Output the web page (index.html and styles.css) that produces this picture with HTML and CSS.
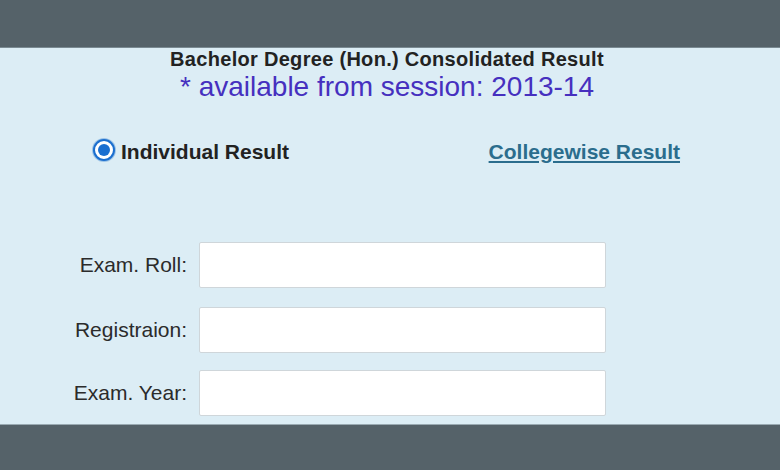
FILE: index.html
```html
<!DOCTYPE html>
<html>
<head>
<meta charset="utf-8">
<link rel="stylesheet" href="styles.css">
</head>
<body>
<div class="topbar"></div>
<main class="panel">
  <div class="title">Bachelor Degree (Hon.) Consolidated Result</div>
  <div class="subtitle">* available from session: 2013-14</div>
  <div class="choices">
    <label class="radio-opt"><span class="radio"><span class="dot"></span></span>Individual Result</label>
    <a class="link" href="#">Collegewise Result</a>
  </div>
  <div class="form">
    <div class="row"><span class="lbl">Exam. Roll:</span><span class="box"></span></div>
    <div class="row"><span class="lbl">Registraion:</span><span class="box"></span></div>
    <div class="row"><span class="lbl">Exam. Year:</span><span class="box"></span></div>
  </div>
</main>
<div class="bottombar"></div>
</body>
</html>
```
FILE: styles.css
```css
html, body { margin: 0; padding: 0; }
body {
  width: 780px;
  height: 470px;
  overflow: hidden;
  font-family: "Liberation Sans", Arial, sans-serif;
  background: #dcedf5;
  display: flex;
  flex-direction: column;
}
.topbar { height: 47px; background: #556269; border-bottom: 1px solid #7a8a92; flex: none; }
.bottombar { height: 45px; background: #556269; border-top: 1px solid #9aaab2; flex: none; }
.panel {
  flex: 1;
  display: flex;
  flex-direction: column;
  background: #dcedf5;
}
.title {
  text-align: center;
  font-weight: bold;
  font-size: 20px;
  line-height: 22px;
  color: #222;
  letter-spacing: 0.3px;
  padding-right: 6px;
}
.subtitle {
  text-align: center;
  font-size: 28px;
  line-height: 30px;
  margin-top: 2px;
  color: #4630bf;
  margin-left: -6px;
}
.choices {
  display: flex;
  justify-content: space-between;
  align-items: center;
  margin-top: 38px;
  padding-left: 93px;
  padding-right: 100px;
}
.radio-opt {
  display: flex;
  align-items: center;
  font-weight: bold;
  font-size: 21px;
  color: #222;
}
.radio {
  width: 18px;
  height: 18px;
  border-radius: 50%;
  border: 2px solid #1b6fcf;
  background: #fff;
  display: flex;
  align-items: center;
  justify-content: center;
  margin-right: 6px;
  margin-top: -4px;
  box-shadow: 0 0 0 1px #9cc3e6;
}
.dot { width: 12px; height: 12px; border-radius: 50%; background: #1a6fd0; }
.link {
  font-weight: bold;
  font-size: 21px;
  color: #2b6d8d;
  text-decoration: underline;
  text-underline-offset: 2px;
}
.form {
  margin-top: 78px;
  display: flex;
  flex-direction: column;
  gap: 19px;
}
.row { display: flex; align-items: center; }
.lbl {
  width: 187px;
  text-align: right;
  font-size: 21px;
  color: #2b2b2b;
  margin-right: 12px;
}
.box {
  width: 405px;
  height: 44px;
  background: #fff;
  border: 1px solid #cfd6da;
  border-radius: 2px;
}
.row:nth-child(3) { margin-top: -2px; }
```
